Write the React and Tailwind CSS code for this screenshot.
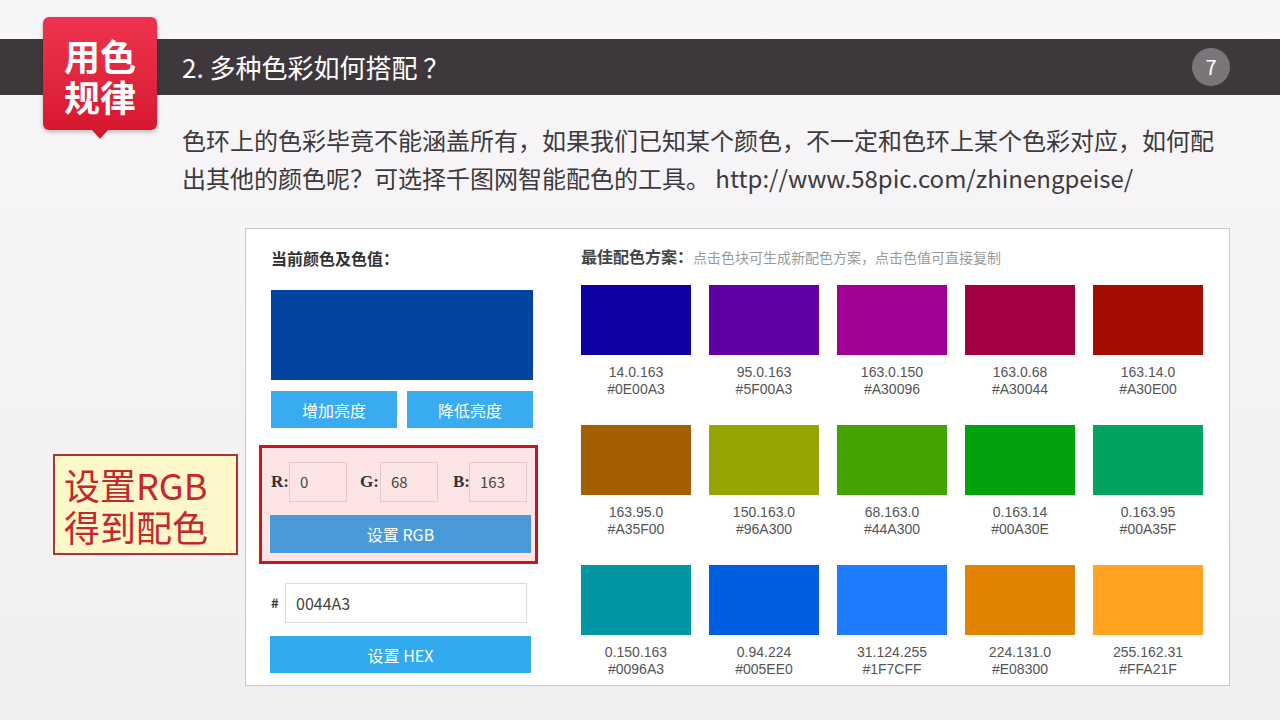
import React from "react";

const CJK = { fontFamily: '"Noto Sans CJK SC", "Noto Sans", sans-serif' };

const swatches = [
  ["#0E00A3", "14.0.163"],
  ["#5F00A3", "95.0.163"],
  ["#A30096", "163.0.150"],
  ["#A30044", "163.0.68"],
  ["#A30E00", "163.14.0"],
  ["#A35F00", "163.95.0"],
  ["#96A300", "150.163.0"],
  ["#44A300", "68.163.0"],
  ["#00A30E", "0.163.14"],
  ["#00A35F", "0.163.95"],
  ["#0096A3", "0.150.163"],
  ["#005EE0", "0.94.224"],
  ["#1F7CFF", "31.124.255"],
  ["#E08300", "224.131.0"],
  ["#FFA21F", "255.162.31"],
];

function RgbInput({ label, value, labelW, gapL }) {
  return (
    <div className={`flex items-center ${gapL}`}>
      <span
        className={`${labelW} text-[17px] font-bold text-[#333]`}
        style={{ fontFamily: '"Liberation Serif", serif' }}
      >
        {label}
      </span>
      <div className="w-[58px] h-[40px] border border-[#e4caca] bg-[#fde5e5] flex items-center pl-[10px] text-[15px] text-[#444]">
        {value}
      </div>
    </div>
  );
}

export default function App() {
  return (
    <div
      className="relative w-[1280px] h-[720px] overflow-hidden flex flex-col bg-gradient-to-b from-[#f8f6f8] to-[#f1eff1]"
      style={CJK}
    >
      <div className="h-[39px]" />
      {/* title bar */}
      <div className="h-[56px] bg-[#3e383d] flex items-center pl-[182px] pr-[50px]">
        <div className="text-white text-[26px] leading-[30px]">2. 多种色彩如何搭配 ？</div>
        <div className="ml-auto w-[38px] h-[38px] rounded-full bg-[#7b7579] flex items-center justify-center text-white text-[20px]">
          7
        </div>
      </div>

      {/* badge */}
      <div className="absolute left-[43px] top-[17px] w-[114px] h-[113px]">
        <div className="w-full h-full rounded-[6px] bg-gradient-to-b from-[#ef3350] to-[#d6182f] shadow-[0_2px_4px_rgba(0,0,0,0.25)] flex flex-col items-center pt-[18px] text-white font-bold text-[36px] leading-[41px]">
          <div className="text-center">
            用色
            <br />
            规律
          </div>
        </div>
        <div className="mx-auto w-0 h-0 border-l-[8px] border-r-[8px] border-t-[9px] border-l-transparent border-r-transparent border-t-[#d6182f]" />
      </div>

      {/* paragraph */}
      <div className="mt-[26px] pl-[182px] text-[24px] leading-[38px] text-[#3c3a3c]">
        <div className="whitespace-nowrap">色环上的色彩毕竟不能涵盖所有，如果我们已知某个颜色，不一定和色环上某个色彩对应，如何配</div>
        <div className="whitespace-nowrap">出其他的颜色呢？可选择千图网智能配色的工具。 http://www.58pic.com/zhinengpeise/</div>
      </div>

      {/* main row */}
      <div className="mt-[31px] flex">
        <div className="w-[245px] pl-[53px] pt-[226px]">
          <div className="w-[185px] h-[101px] bg-[#fef7c9] border-2 border-[#a8352f] flex flex-col justify-center pl-[9px] text-[#c4272c] text-[36px] leading-[42px]">
            <div>
              设置RGB
              <br />
              得到配色
            </div>
          </div>
        </div>

        <div className="w-[985px] h-[458px] bg-white border border-[#c9c9c9] flex pl-[25px]">
          {/* left column */}
          <div className="w-[262px] flex flex-col pt-[19px]">
            <div className="text-[16px] leading-[20px] font-bold text-[#333]">当前颜色及色值：</div>
            <div className="mt-[22px] h-[90px] w-[262px] bg-[#0143a0]" />
            <div className="mt-[11px] flex gap-[10px]">
              <div className="w-[126px] h-[37px] bg-[#39abf0] text-white text-[16px] flex items-center justify-center">增加亮度</div>
              <div className="w-[126px] h-[37px] bg-[#39abf0] text-white text-[16px] flex items-center justify-center">降低亮度</div>
            </div>
            <div className="mt-[17px] -ml-[12px] w-[279px] h-[119px] border-[3px] border-[#c8161e] bg-[#fde5e5] pl-[8px] pr-[4px] pt-[14px]">
              <div className="flex items-center pl-[1px]">
                <RgbInput label="R:" value="0" labelW="w-[18px]" gapL="" />
                <RgbInput label="G:" value="68" labelW="w-[20px]" gapL="ml-[13px]" />
                <RgbInput label="B:" value="163" labelW="w-[16px]" gapL="ml-[15px]" />
              </div>
              <div className="mt-[13px] w-[261px] h-[38px] bg-[#4a99d9] text-white text-[16px] flex items-center justify-center">
                设置 RGB
              </div>
            </div>
            <div className="mt-[19px] flex items-center">
              <span className="w-[14px] text-[13px] font-bold text-[#333]">#</span>
              <div className="w-[242px] h-[40px] border border-[#dcdcdc] bg-white flex items-center pl-[10px] text-[16px] text-[#444]">
                0044A3
              </div>
            </div>
            <div className="mt-[13px] -ml-[1px] w-[261px] h-[37px] bg-[#32aaef] text-white text-[16px] flex items-center justify-center">
              设置 HEX
            </div>
          </div>

          {/* right column */}
          <div className="ml-[48px] flex flex-col pt-[17px]">
            <div className="flex items-baseline leading-[20px] whitespace-nowrap">
              <span className="text-[16px] font-bold text-[#444]">最佳配色方案</span>
              <span className="text-[16px] font-bold text-[#444] w-[16px]">：</span>
              <span className="text-[14px] text-[#9a9a9a]">点击色块可生成新配色方案，点击色值可直接复制</span>
            </div>
            <div className="mt-[18px] grid grid-cols-[repeat(5,110px)] gap-x-[18px] gap-y-[27px]">
              {swatches.map(([hex, rgb]) => (
                <div key={hex} className="flex flex-col items-center">
                  <div className="w-[110px] h-[70px]" style={{ backgroundColor: hex }} />
                  <div
                    className="mt-[9px] text-[14px] leading-[17px] text-[#555] text-center"
                    style={{ fontFamily: '"Liberation Sans", sans-serif' }}
                  >
                    <div>{rgb}</div>
                    <div>#{hex.slice(1)}</div>
                  </div>
                </div>
              ))}
            </div>
          </div>
        </div>
      </div>
    </div>
  );
}
